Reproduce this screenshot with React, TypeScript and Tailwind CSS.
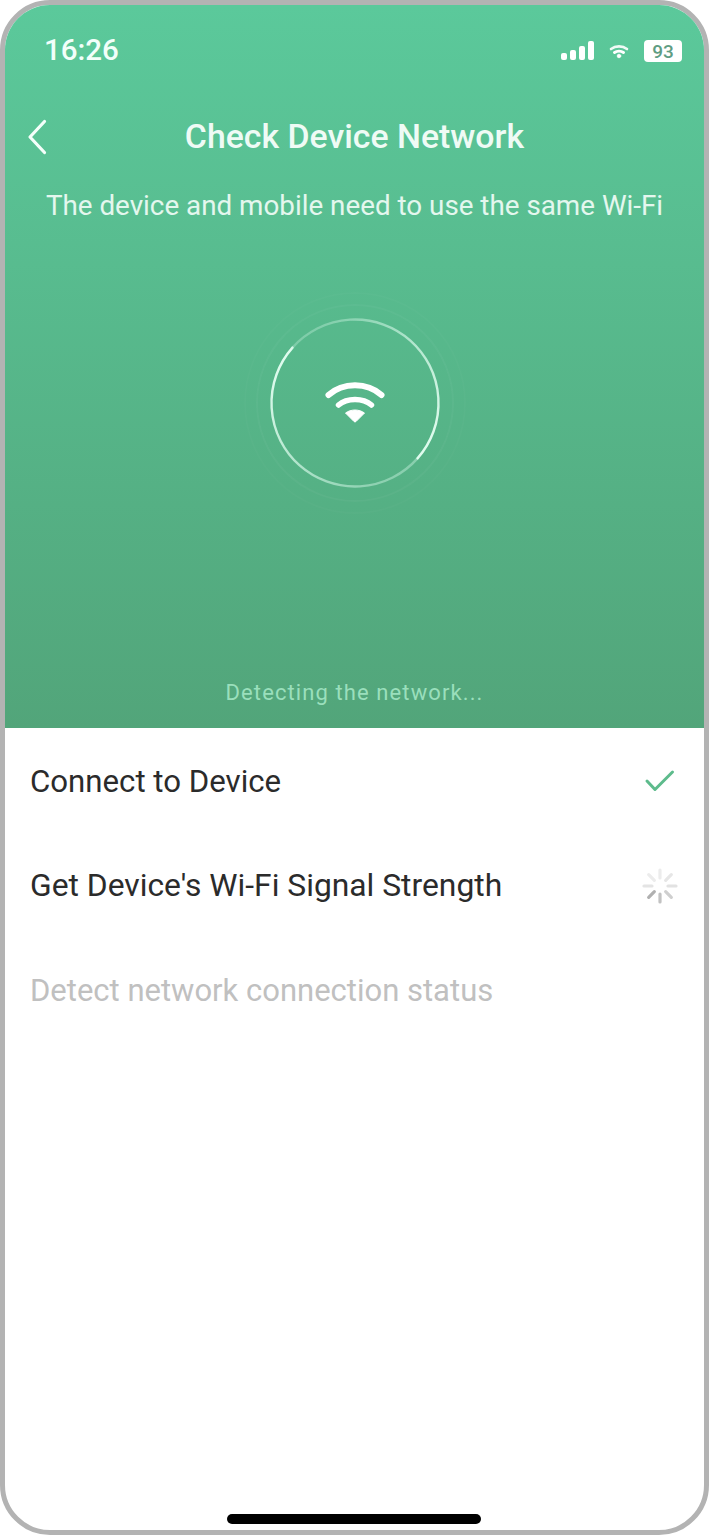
import React from 'react';

function StatusIcons() {
  return (
    <div className="flex items-center">
      <svg width="36" height="22" viewBox="0 0 36 22" fill="white">
        <rect x="1" y="13" width="6" height="7" rx="2" />
        <rect x="10" y="10" width="6" height="10" rx="2" />
        <rect x="19" y="6" width="6" height="14" rx="2" />
        <rect x="28" y="1" width="6" height="19" rx="2" />
      </svg>
      <svg className="ml-[11px]" width="24" height="18" viewBox="0 0 24 18" fill="none" stroke="white" strokeLinecap="round">
        <path d="M4 7 C8.500 3.500 15.500 3.500 20 7" strokeWidth="2.600" strokeOpacity="0.9" />
        <path d="M7.500 10.500 C10 8.800 14 8.800 16.500 10.500" strokeWidth="3" />
        <circle cx="12" cy="14" r="1.800" fill="white" strokeWidth="0.800" />
      </svg>
      <div className="ml-[13px] flex h-[22px] w-[38px] items-center justify-center rounded-[4px] bg-white text-[19px] font-medium leading-none text-[#5f9d83]">
        93
      </div>
    </div>
  );
}

function BackIcon() {
  return (
    <svg width="22" height="36" viewBox="0 0 22 36" fill="none" stroke="#f4fffa" strokeWidth="3.200" strokeLinecap="round" strokeLinejoin="round">
      <path d="M18.500 2.500 L4 18 L18.500 33.500" />
    </svg>
  );
}

function DetectRing() {
  return (
    <svg width="240" height="240" viewBox="0 0 240 240" fill="none">
      <defs>
        <linearGradient id="arcLeft" x1="58" y1="65" x2="182" y2="175" gradientUnits="userSpaceOnUse">
          <stop offset="0" stopColor="#e6fff3" stopOpacity="0.95" />
          <stop offset="0.5" stopColor="#d6f8e8" stopOpacity="0.7" />
          <stop offset="1" stopColor="#c8f2df" stopOpacity="0.45" />
        </linearGradient>
        <linearGradient id="arcRight" x1="182" y1="175" x2="58" y2="65" gradientUnits="userSpaceOnUse">
          <stop offset="0" stopColor="#e6fff3" stopOpacity="0.95" />
          <stop offset="0.5" stopColor="#d6f8e8" stopOpacity="0.7" />
          <stop offset="1" stopColor="#c8f2df" stopOpacity="0.35" />
        </linearGradient>
      </defs>
      <circle cx="120" cy="120" r="98" stroke="#ffffff" strokeOpacity="0.035" strokeWidth="2" />
      <circle cx="120" cy="120" r="110" stroke="#ffffff" strokeOpacity="0.02" strokeWidth="2" />
      <path d="M57.500 64.600 A83.500 83.500 0 0 0 182.500 175.400" stroke="url(#arcLeft)" strokeWidth="2.400" strokeLinecap="round" />
      <path d="M182.500 175.400 A83.500 83.500 0 0 0 57.500 64.600" stroke="url(#arcRight)" strokeWidth="2.400" strokeLinecap="round" />
      <g fill="none" stroke="white" strokeLinecap="round">
        <path d="M93.500 112 C108 99 132 99 146.500 112" strokeWidth="6" />
        <path d="M103.500 122 C112 114.500 128 114.500 136.500 122" strokeWidth="5.500" />
      </g>
      <path d="M110.500 130 C116 126 124 126 129.500 130 L121 138.500 Q120 139.500 119 138.500 Z" fill="white" stroke="white" strokeWidth="1" strokeLinejoin="round" />
    </svg>
  );
}

function Spinner() {
  const spokes = [
    { a: 0, c: '#ececec' },
    { a: 45, c: '#e6e6e6' },
    { a: 90, c: '#e2e2e2' },
    { a: 135, c: '#cfcfcf' },
    { a: 180, c: '#c2c2c2' },
    { a: 225, c: '#b0b0b0' },
    { a: 270, c: '#e4e4e4' },
    { a: 315, c: '#ececec' },
  ];
  return (
    <svg width="38" height="38" viewBox="0 0 38 38" fill="none">
      {spokes.map((s) => (
        <line key={s.a} x1="19" y1="3" x2="19" y2="11" stroke={s.c} strokeWidth="3.200" strokeLinecap="round" transform={`rotate(${s.a} 19 19)`} />
      ))}
    </svg>
  );
}

function CheckIcon() {
  return (
    <svg width="32" height="26" viewBox="0 0 32 26" fill="none">
      <path d="M3 13 L11 21.500 L28.500 4" stroke="#5dbb8c" strokeWidth="3" strokeLinecap="round" strokeLinejoin="round" />
    </svg>
  );
}

export default function App() {
  return (
    <div className="h-[1535px] w-[709px] bg-white font-['Roboto',sans-serif]">
      <div className="flex h-full w-full flex-col overflow-hidden rounded-[50px] border-[5px] border-[#b3b3b3] bg-white">
        {/* Green header */}
        <div className="flex h-[723px] flex-col bg-gradient-to-b from-[#5bc99b] to-[#52a57a]">
          <div className="mt-[32px] flex h-[28px] items-center justify-between pl-[39px] pr-[22px]">
            <span className="text-[29.500px] font-medium leading-none text-[#f2fffa]">16:26</span>
            <StatusIcons />
          </div>

          <div className="relative mt-[50px] flex h-[44px] items-center justify-center">
            <div className="absolute left-[21px] top-[4px]"><BackIcon /></div>
            <h1 className="text-[33.800px] font-medium leading-none text-[#effbf5]">Check Device Network</h1>
          </div>

          <p className="mt-[32px] text-center text-[27.800px] leading-[30px] text-[#e4f7ee]">
            The device and mobile need to use the same Wi-Fi
          </p>

          <div className="mt-[62px] flex justify-center">
            <DetectRing />
          </div>

          <p className="mb-[22px] mt-auto text-center text-[22px] leading-[26px] tracking-[1.100px] text-[#9adfbc]">
            Detecting the network...
          </p>
        </div>

        {/* Check list */}
        <div className="flex flex-1 flex-col pl-[25px] pr-[26px] pt-[34px]">
          <div className="flex h-[40px] items-center justify-between">
            <span className="text-[31.200px] leading-none text-[#2b2b2b]">Connect to Device</span>
            <span className="mr-[2px] mt-[-2px]"><CheckIcon /></span>
          </div>
          <div className="mt-[64px] flex h-[40px] items-center justify-between">
            <span className="text-[31.800px] leading-none text-[#2b2b2b]">Get Device's Wi-Fi Signal Strength</span>
            <span className="mr-[-1px] mt-[-1px]"><Spinner /></span>
          </div>
          <div className="mt-[64px] flex h-[40px] items-center">
            <span className="text-[31px] leading-none text-[#c0c0c0]">Detect network connection status</span>
          </div>
          <div className="mb-[6px] mt-auto flex justify-center">
            <div className="h-[10px] w-[254px] rounded-full bg-black" />
          </div>
        </div>
      </div>
    </div>
  );
}
